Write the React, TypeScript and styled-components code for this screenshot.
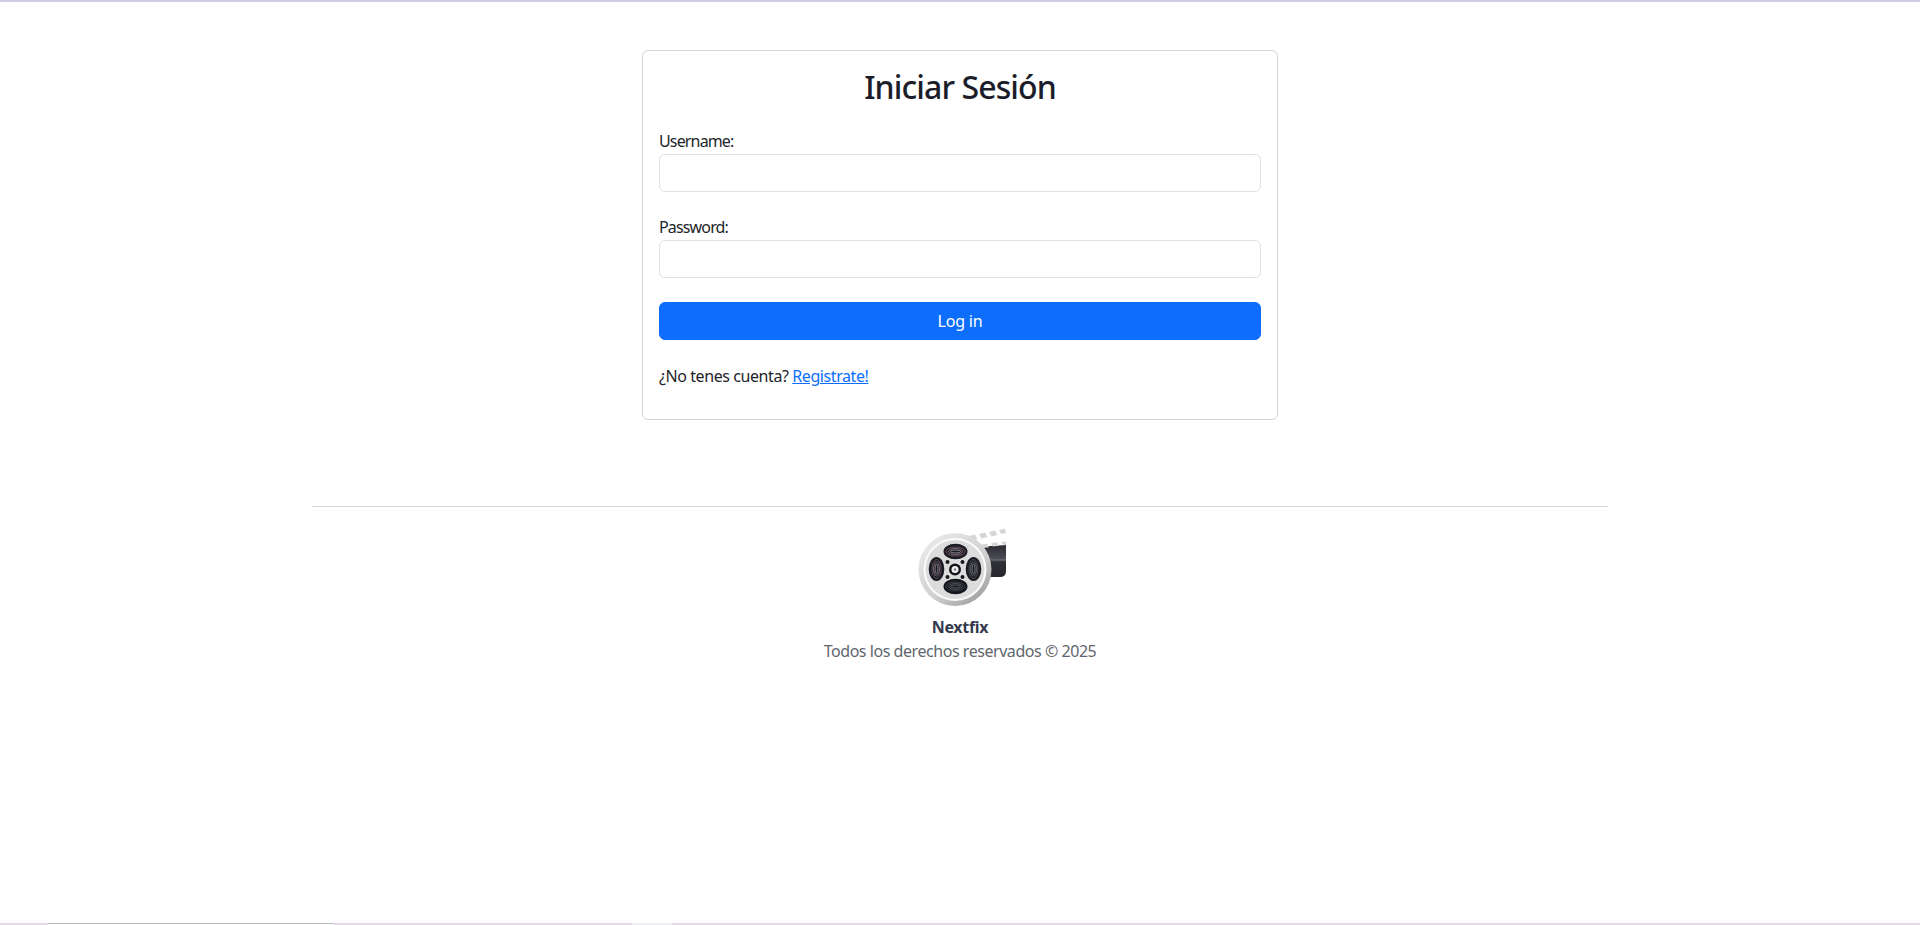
import React from 'react';
import styled, { createGlobalStyle } from 'styled-components';

const GlobalStyle = createGlobalStyle`
  html, body {
    margin: 0;
    padding: 0;
    background: #fff;
  }
  * {
    box-sizing: border-box;
  }
  body {
    font-family: "Noto Sans", "Open Sans", "Liberation Sans", sans-serif;
    font-size: 16px;
    line-height: 1.5;
    color: #212529;
  }
`;

const Page = styled.div`
  height: 925px;
  display: flex;
  flex-direction: column;
  overflow: hidden;
  border-top: 2px solid #cfcbe2;
`;

const Main = styled.main`
  flex: 1;
  width: 1320px;
  margin: 0 auto;
  padding: 48px 12px 0;
`;

const Card = styled.section`
  width: 636px;
  height: 370px;
  margin: 0 auto;
  padding: 17px 16px 16px;
  background: #fff;
  border: 1px solid #d3d3d8;
  border-radius: 6px;
`;

const Title = styled.h2`
  margin: 0 0 24px;
  font-size: 32px;
  font-weight: 500;
  line-height: 38px;
  text-align: center;
  letter-spacing: -0.9px;
  color: #1b1e2a;
`;

const Field = styled.div`
  margin-bottom: 24px;
`;

const Label = styled.label`
  display: block;
  height: 24px;
  font-size: 16px;
  line-height: 23px;
  letter-spacing: -0.85px;
`;

const Input = styled.input`
  display: block;
  width: 100%;
  height: 38px;
  padding: 6px 12px;
  background: #fff;
  border: 1px solid #dee2e6;
  border-radius: 6px;
  outline: none;
  font: inherit;
`;

const SubmitButton = styled.button`
  display: block;
  width: 100%;
  height: 38px;
  padding: 6px 12px;
  background: #0d6efd;
  border: 1px solid #0d6efd;
  border-radius: 6px;
  color: #fff;
  font: inherit;
  letter-spacing: -0.2px;
  cursor: pointer;
`;

const RegisterText = styled.p`
  margin: 24px 0 0;
  letter-spacing: -0.42px;
`;

const RegisterLink = styled.a`
  color: #0d6efd;
  text-decoration: underline;
`;

const Footer = styled.footer`
  margin-top: 86px;
  border-top: 1px solid #d3d3d8;
  padding-top: 20px;
  display: flex;
  flex-direction: column;
  align-items: center;
`;

const Logo = styled.svg`
  display: block;
  width: 90px;
  height: 80px;
  margin-left: 4px;
`;

const Brand = styled.strong`
  margin-top: 8px;
  font-size: 16px;
  font-weight: 700;
  color: #343a4e;
  letter-spacing: -0.3px;
`;

const Rights = styled.span`
  color: #5f666d;
  letter-spacing: -0.45px;
`;

const BottomStrip = styled.div`
  height: 2px;
  display: flex;
  background: #e4d8e8;
`;

const StripPart = styled.div<{ $left: number; $width: number; $kind: 'window' | 'pale' }>`
  margin-left: ${(p) => p.$left}px;
  width: ${(p) => p.$width}px;
  background: ${(p) => (p.$kind === 'window' ? '#fff' : '#f1eff6')};
  border-top: ${(p) => (p.$kind === 'window' ? '1px solid #b9b9b9' : 'none')};
`;

const ReelLogo = () => (
  <Logo viewBox="0 0 90 80">
    <defs>
      <linearGradient id="rim" x1="0.1" y1="0" x2="0.9" y2="1">
        <stop offset="0" stopColor="#ececec" />
        <stop offset="0.6" stopColor="#cfcfcf" />
        <stop offset="1" stopColor="#979797" />
      </linearGradient>
      <linearGradient id="slate" x1="0" y1="0" x2="0" y2="1">
        <stop offset="0" stopColor="#2a2a31" />
        <stop offset="0.42" stopColor="#4c4c54" />
        <stop offset="0.47" stopColor="#6c6c74" />
        <stop offset="0.52" stopColor="#303037" />
        <stop offset="1" stopColor="#26262c" />
      </linearGradient>
    </defs>
    {/* clapper */}
    <path d="M58 20 L89 18 V44 Q89 50 83 50 H58 Z" fill="url(#slate)" />
    <g fill="#d6d6d6">
      <path d="M41 11l7-2 2.500 4.500-7 2z" />
      <path d="M52 9l6-1.500 2.500 4.500-6 1.500z" />
      <path d="M62 7l6-1.500 2.500 4.500-6 1.500z" />
      <path d="M72 5l6-1.500 2.500 4.500-6 1.500z" />
      <path d="M82 3l6-1.500 1 4.500-5 1z" />
      <path d="M54 19l6-.800 2 3.500-6 .800z" />
      <path d="M64 17.500l6-.800 2 3.500-6 .800z" />
      <path d="M74 16l6-.800 2 3.500-6 .800z" />
      <path d="M84 15l5-.600v3.500l-3 .400z" />
    </g>
    {/* reel */}
    <circle cx="38" cy="42.500" r="36.500" fill="url(#rim)" />
    <circle cx="38" cy="42.500" r="31.500" fill="#fbfbfb" />
    <circle cx="38" cy="42.500" r="29.500" fill="#dcdcdc" />
    <ellipse cx="38.500" cy="24.500" rx="12" ry="7.800" fill="#1b1b24" />
    <ellipse cx="38.500" cy="59.500" rx="12" ry="7.800" fill="#14171e" />
    <ellipse cx="19.500" cy="42" rx="7.800" ry="12" fill="#1b1b24" />
    <ellipse cx="56.500" cy="42" rx="7.800" ry="12" fill="#1b1b24" />
    <g fill="none" strokeWidth="0.5">
      <ellipse cx="38.500" cy="24.500" rx="9.500" ry="4.500" stroke="#b87a8a" />
      <ellipse cx="38.500" cy="24.500" rx="7" ry="3" stroke="#d8b8c0" />
      <ellipse cx="38.500" cy="24.500" rx="5" ry="1.500" stroke="#eee6e8" />
      <ellipse cx="38.500" cy="59.500" rx="9.500" ry="4.500" stroke="#5f6368" />
      <ellipse cx="38.500" cy="59.500" rx="7" ry="3" stroke="#858a8f" />
      <ellipse cx="38.500" cy="59.500" rx="5" ry="1.500" stroke="#a0a4a8" />
      <ellipse cx="19.500" cy="42" rx="4.500" ry="9.500" stroke="#9a6f7c" />
      <ellipse cx="19.500" cy="42" rx="3" ry="7" stroke="#c8a8b0" />
      <ellipse cx="19.500" cy="42" rx="1.500" ry="5" stroke="#e0d6d8" />
      <ellipse cx="56.500" cy="42" rx="4.500" ry="9.500" stroke="#74777c" />
      <ellipse cx="56.500" cy="42" rx="3" ry="7" stroke="#a0a3a7" />
      <ellipse cx="56.500" cy="42" rx="1.500" ry="5" stroke="#cfd1d4" />
    </g>
    <circle cx="38" cy="42.500" r="6" fill="#14141a" />
    <circle cx="38" cy="42.500" r="3.500" fill="#f0f0f0" />
    <circle cx="38" cy="42.500" r="1.200" fill="#77777c" />
    <g fill="#17171d">
      <circle cx="30.500" cy="35" r="2" />
      <circle cx="45.500" cy="35" r="2" />
      <circle cx="30.500" cy="50" r="2" />
      <circle cx="45.500" cy="50" r="2" />
    </g>
  </Logo>
);

export default function App() {
  return (
    <Page>
      <GlobalStyle />
      <Main>
        <Card>
          <Title>Iniciar Sesión</Title>
          <form onSubmit={(e) => e.preventDefault()}>
            <Field>
              <Label htmlFor="username">Username:</Label>
              <Input id="username" type="text" />
            </Field>
            <Field>
              <Label htmlFor="password">Password:</Label>
              <Input id="password" type="password" />
            </Field>
            <SubmitButton type="submit">Log in</SubmitButton>
          </form>
          <RegisterText>
            ¿No tenes cuenta? <RegisterLink href="#">Registrate!</RegisterLink>
          </RegisterText>
        </Card>
        <Footer>
          <ReelLogo />
          <Brand>Nextfix</Brand>
          <Rights>Todos los derechos reservados © 2025</Rights>
        </Footer>
      </Main>
      <BottomStrip>
        <StripPart $left={48} $width={286} $kind="window" />
        <StripPart $left={298} $width={40} $kind="pale" />
      </BottomStrip>
    </Page>
  );
}
